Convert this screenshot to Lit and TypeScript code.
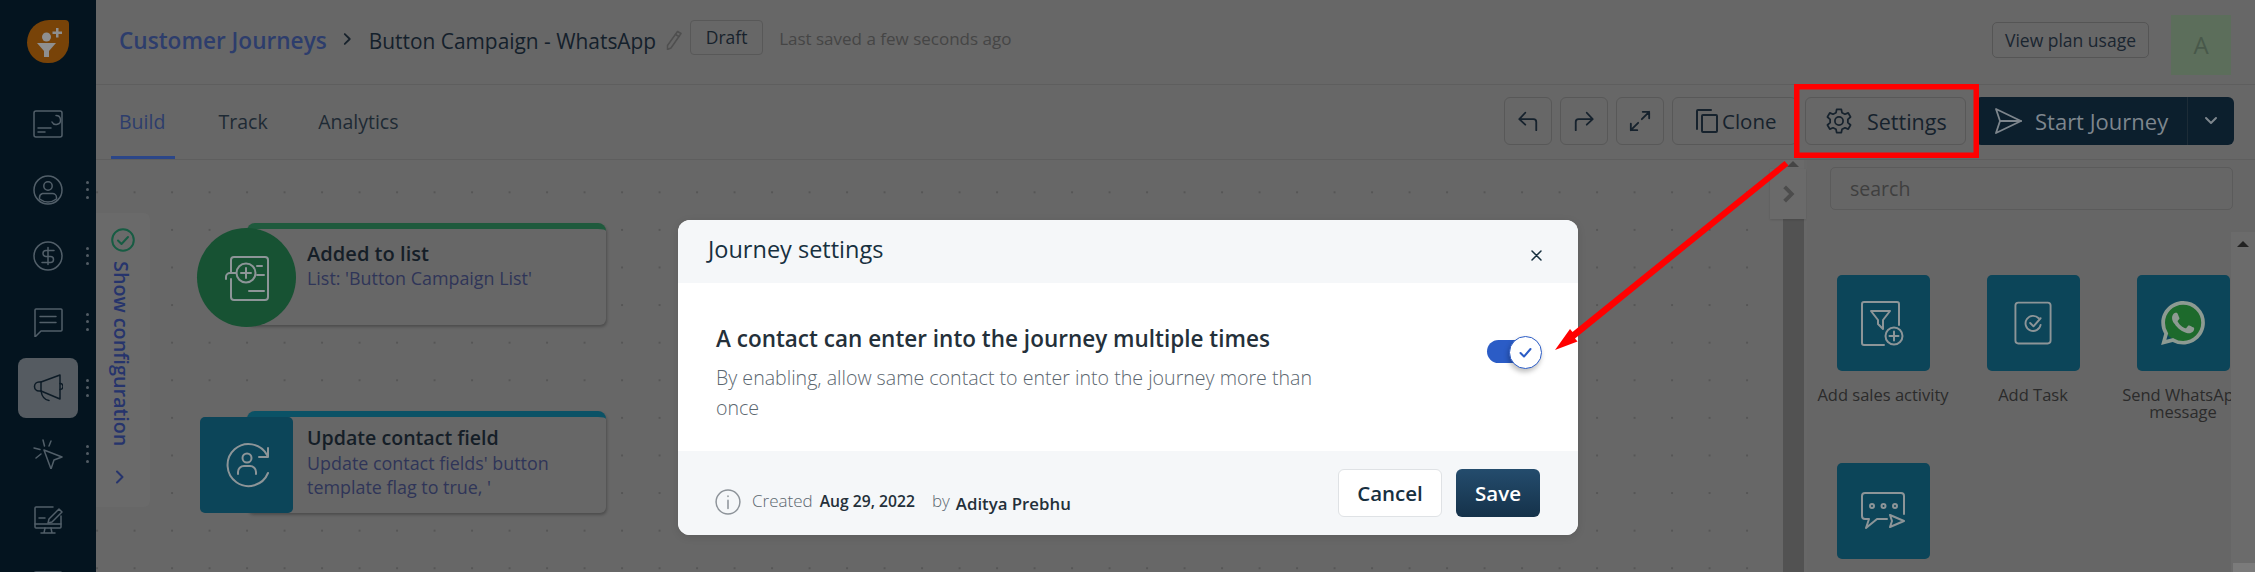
import { LitElement, html, css } from "lit";
import { customElement } from "lit/decorators.js";

const sideIcons = [
  html`<svg viewBox="0 0 30 30"><rect x="1" y="2" width="28" height="26" rx="2"/><path d="M5 19h13M5 23h7"/><path d="M23 6.500a4.500 4.500 0 1 1-4 6.500"/></svg>`,
  html`<svg viewBox="0 0 30 30"><circle cx="15" cy="15" r="14"/><circle cx="15" cy="11" r="4.200"/><path d="M10.500 18.500h9a4 4 0 0 1 4 4v1.500a14 14 0 0 1-17 0v-1.500a4 4 0 0 1 3-4z"/></svg>`,
  html`<svg viewBox="0 0 30 30"><circle cx="15" cy="15" r="14"/><path d="M21 9.500h-8a3 3 0 0 0 0 6h4.500a3 3 0 0 1 0 6H9M15 6.500v17"/></svg>`,
  html`<svg viewBox="0 0 30 30"><path d="M2 3a1 1 0 0 1 1-1h25a1 1 0 0 1 1 1v20a1 1 0 0 1-1 1H8l-6 6z"/><path d="M7 9.500h16M7 15.500h16"/></svg>`,
  html`<svg viewBox="0 0 30 30"><path d="M8 9 27 2v24L8 18z"/><path d="M8 9H6a4.500 4.500 0 0 0 0 9h2"/><path d="M8 18c1 6 4 9 8 9.500"/><path d="M27 10.500a3 3 0 0 1 0 6"/></svg>`,
  html`<svg viewBox="0 0 30 30"><path d="M11 11l18 7-8 3-3 9z"/><path d="M10 1l1.500 6M1 9l6 1.500M3 19l5-4M18 2l-2 5"/></svg>`,
  html`<svg viewBox="0 0 30 30"><path d="M20 2H3a1 1 0 0 0-1 1v19a1 1 0 0 0 1 1h24a1 1 0 0 0 1-1V11"/><path d="M2 19h26M12 23l-1 5M18 23l1 5M8 28h14M6 13h6"/><path d="M16 14l10-10 3 3-10 10-4 1z"/></svg>`,
  html`<svg viewBox="0 0 30 30"><rect x="1" y="1" width="28" height="26" rx="2"/></svg>`,
];

const undo = html`<svg viewBox="0 0 24 24"><path d="M21 22v-9a3 3 0 0 0-3-3H3M9 3 2.500 10l6.500 6"/></svg>`;
const redo = html`<svg viewBox="0 0 24 24"><path d="M3 22v-9a3 3 0 0 1 3-3h15M15 3l6.500 7-6.500 6"/></svg>`;
const expand = html`<svg viewBox="0 0 24 24"><path d="M14 10 22 2M15 2h7v7M10 14l-8 8M2 15v7h7"/></svg>`;
const clone = html`<svg viewBox="0 0 24 24"><path d="M16 1H3a1 1 0 0 0-1 1v18"/><rect x="7" y="6" width="15" height="17" rx="1"/></svg>`;
const gear = html`<svg viewBox="0 0 24 24"><circle cx="12" cy="12" r="3.500"/><path d="M10 2h4l.6 3 2.500 1.200 2.800-1.200 2 3.600-2.300 2v2.800l2.300 2-2 3.600-2.800-1.200-2.500 1.200-.6 3h-4l-.6-3-2.500-1.200-2.800 1.200-2-3.600 2.300-2v-2.800l-2.300-2 2-3.600 2.800 1.200L9.400 5z"/></svg>`;
const send = html`<svg viewBox="0 0 28 28"><path d="M2 2l25 12L2 26l4-12z"/><path d="M6 14h21"/></svg>`;
const caret = html`<svg viewBox="0 0 14 10"><path d="M2 2l5 5 5-5"/></svg>`;
const chevron = html`<svg viewBox="0 0 10 14"><path d="M2 1.500 7.500 7 2 12.500"/></svg>`;
const pencil = html`<svg viewBox="0 0 16 20"><path d="M11.500 1.500l3.500 2L5 18l-3.500 1.500L1.500 15.500z"/><path d="M9.500 4.500l3.500 2"/></svg>`;

const tileFilter = html`<svg viewBox="0 0 44 46"><path d="M38 25V4a2 2 0 0 0-2-2H3a2 2 0 0 0-2 2v39a2 2 0 0 0 2 2h20"/><path d="M10 11h19l-7 9v9l-5-5v-4z"/><circle cx="33" cy="36" r="8.500"/><path d="M33 31.500v9M28.500 36h9"/></svg>`;
const tileTask = html`<svg viewBox="0 0 40 46"><rect x="1.500" y="1.500" width="37" height="43" rx="3"/><path d="M26 18a8 8 0 1 0 2 7"/><path d="M17 23l3.500 3.500L28 18"/></svg>`;
const tileWa = html`<svg viewBox="0 0 24 24"><circle class="wa-g" cx="12" cy="12" r="10.500"/><path class="wa" d="M17.472 14.382c-.297-.149-1.758-.867-2.03-.967-.273-.099-.471-.148-.67.15-.197.297-.767.966-.94 1.164-.173.199-.347.223-.644.075-.297-.15-1.255-.463-2.39-1.475-.883-.788-1.48-1.761-1.653-2.059-.173-.297-.018-.458.13-.606.134-.133.298-.347.446-.52.149-.174.198-.298.298-.497.099-.198.05-.371-.025-.52-.075-.149-.669-1.612-.916-2.207-.242-.579-.487-.5-.669-.51-.173-.008-.371-.01-.57-.01-.198 0-.52.074-.792.372-.272.297-1.04 1.016-1.04 2.479 0 1.462 1.065 2.875 1.213 3.074.149.198 2.096 3.2 5.077 4.487.709.306 1.262.489 1.694.625.712.227 1.36.195 1.871.118.571-.085 1.758-.719 2.006-1.413.248-.694.248-1.289.173-1.413-.074-.124-.272-.198-.57-.347m-5.421 7.403h-.004a9.87 9.87 0 01-5.031-1.378l-.361-.214-3.741.982.998-3.648-.235-.374a9.86 9.86 0 01-1.51-5.26c.001-5.45 4.436-9.884 9.888-9.884 2.64 0 5.122 1.03 6.988 2.898a9.825 9.825 0 012.893 6.994c-.003 5.45-4.437 9.884-9.885 9.884m8.413-18.297A11.815 11.815 0 0012.05 0C5.495 0 .16 5.335.157 11.892c0 2.096.547 4.142 1.588 5.945L.057 24l6.305-1.654a11.882 11.882 0 005.683 1.448h.005c6.554 0 11.89-5.335 11.893-11.893a11.821 11.821 0 00-3.48-8.413z"/></svg>`;
const tileChat = html`<svg viewBox="0 0 44 38"><path d="M43 22V4a3 3 0 0 0-3-3H4a3 3 0 0 0-3 3v20a3 3 0 0 0 3 3h4l-3 9 11-9h10"/><circle cx="11" cy="14" r="2"/><circle cx="22.500" cy="14" r="2"/><circle cx="34" cy="14" r="2"/><path d="M29 23l14 6-14 6 2-6z"/></svg>`;

const tiles = [
  { icon: tileFilter, label: "Add sales activity", cls: "i-filter" },
  { icon: tileTask, label: "Add Task", cls: "i-task" },
  { icon: tileWa, label: "Send WhatsApp message", cls: "i-wa" },
  { icon: tileChat, label: "", cls: "i-chat" },
];

@customElement("app-root")
export class AppRoot extends LitElement {
  static styles = css`
    :host { display: block; width: 2255px; height: 572px; position: relative; overflow: hidden;
      font-family: "Open Sans", "Noto Sans", sans-serif; background: #676767; color: #17222c; }
    svg { display: block; fill: none; stroke: currentColor; stroke-width: 2; stroke-linecap: round; stroke-linejoin: round; }
    .app { display: flex; height: 572px; }

    .side { width: 96px; flex: none; background: #04141f; overflow: hidden; display: flex; flex-direction: column; align-items: center; padding-top: 20px; gap: 6px; box-sizing: border-box; height: 572px; }
    .logo { width: 42px; height: 43px; margin-bottom: 25px; flex: none; background: #784308; border-radius: 55% 10% 50% 50%; display: flex; align-items: center; justify-content: center; }
    .logo svg { width: 30px; height: 32px; fill: #8f8f8f; stroke: none; }
    .item { width: 60px; height: 60px; flex: none; position: relative; display: flex; align-items: center; justify-content: center; color: #525f69; border-radius: 8px; }
    .item svg { width: 30px; height: 30px; stroke-width: 1.500; }
    .item.active { background: #555b61; color: #0d1b26; }
    .dots { position: absolute; left: 68px; top: 21px; display: flex; flex-direction: column; gap: 4.400px; }
    .dots i { width: 3px; height: 3px; border-radius: 50%; background: #525c64; display: block; }

    .main { flex: 1; display: flex; flex-direction: column; min-width: 0; }
    .top { height: 85px; flex: none; box-sizing: border-box; border-bottom: 1px solid #5e5e5e; display: flex; align-items: center; padding: 0 24px 3px 23px; }
    .crumb { font-size: 22.600px; font-weight: 600; color: #2d3d6c; }
    .sep { width: 9px; height: 14px; margin: -4px 17px 0 16px; color: #17222c; }
    .sep svg { width: 9px; height: 14px; stroke-width: 2; }
    .name { font-size: 20.900px; font-weight: 500; color: #14202b; }
    .pen { width: 16px; height: 20px; margin: -2px 8px 0 10px; color: #4f4f4f; }
    .pen svg { width: 16px; height: 20px; stroke-width: 1.500; }
    .draft { height: 35px; width: 73px; box-sizing: border-box; border: 1px solid #585858; border-radius: 4px; display: flex; align-items: center; justify-content: center; font-size: 17.500px; font-weight: 500; color: #17222c; margin-top: -7px; }
    .saved { margin: -4px 0 0 16px; font-size: 17px; color: #454545; }
    .plan { margin: -2px 0 0 auto; height: 36px; box-sizing: border-box; border: 1px solid #555; border-radius: 5px; padding: 0 12px; display: flex; align-items: center; font-size: 17.500px; font-weight: 500; color: #1a2530; }
    .avatar { margin: 8px 0 0 22px; width: 60px; height: 60px; background: #5c6e5b; color: #48584a; display: flex; align-items: center; justify-content: center; font-size: 24px; }

    .tabs { height: 75px; flex: none; box-sizing: border-box; border-bottom: 1px solid #5e5e5e; display: flex; padding: 0 21px 0 15px; }
    .tab { padding: 0 8px; height: 74px; box-sizing: border-box; display: flex; align-items: center; font-size: 19.500px; color: #1e2a34; margin-right: 34.500px; padding-bottom: 2px; position: relative; }
    .tab.on { color: #2d3d6c; font-weight: 500; width: 64px; margin-right: 35.500px; }
    .tab.on::after { content: ""; position: absolute; left: 0; right: 0; bottom: 0; height: 3px; background: #2b4688; }
    .tools { margin-left: auto; display: flex; gap: 8px; align-items: center; margin-top: -2px; }
    .btn { height: 48px; box-sizing: border-box; border: 1px solid #585858; border-radius: 6px; display: flex; align-items: center; justify-content: center; color: #16222d; font-size: 20.500px; font-weight: 500; }
    .btn.sq { width: 48px; }
    .btn.sq svg { width: 22px; height: 22px; }
    .btn.clone { width: 125px; justify-content: flex-start; gap: 3px; padding-left: 22px; }
    .btn.clone svg { width: 24px; height: 26px; }
    .btn.settings { width: 161px; justify-content: flex-start; gap: 14px; padding-left: 19px; font-size: 21.500px; }
    .btn.settings svg { width: 28px; height: 28px; stroke-width: 1.500; }
    .start { width: 259px; height: 48px; margin-left: 1px; background: #0c1f2d; border-radius: 6px; display: flex; align-items: center; color: #7e868d; font-size: 22px; font-weight: 500; }
    .start .go { flex: 1; display: flex; align-items: center; gap: 13px; padding-left: 19px; }
    .start .go svg { width: 28px; height: 28px; stroke-width: 1.800; }
    .start .more { width: 47px; height: 48px; border-left: 1px solid #1d2c37; display: flex; align-items: center; justify-content: center; box-sizing: border-box; }
    .start .more svg { width: 14px; height: 10px; }

    .body { flex: 1; display: flex; min-height: 0; }
    .canvas { flex: 1; position: relative; background-color: #676767; background-image: radial-gradient(circle, #565656 1px, transparent 1.300px); background-size: 37.500px 37.600px; background-position: -17.700px 13.500px; }
    .cfg { position: absolute; left: 0; top: 53px; width: 54px; height: 294px; background: #6a6a6a; border-radius: 0 6px 6px 0; display: flex; flex-direction: column; align-items: center; color: #26346c; padding-top: 15px; box-sizing: border-box; }
    .cfg .ok { width: 24px; height: 24px; color: #175c43; }
    .cfg .v { writing-mode: vertical-rl; font-size: 19.800px; font-weight: 600; margin-top: 9px; line-height: 24px; margin-left: -4px; }
    .cfg .ch { width: 10px; height: 14px; margin-top: 24px; margin-left: -6px; }
    .cfg .ch svg { width: 10px; height: 14px; stroke-width: 2; }

    .node { position: absolute; left: 151px; width: 359px; height: 102px; box-sizing: border-box; border-top: 6px solid #1f5a3d; background: #676767; border-radius: 8px 8px 6px 6px; box-shadow: 1px 2px 3px rgba(0,0,0,.25); padding: 12px 0 0 60px; }
    .node.n1 { top: 63px; }
    .node.n2 { top: 251px; border-top-color: #0b5266; padding-top: 8px; }
    .n2 span { margin-top: 1px; }
    .node .ic { position: absolute; display: flex; align-items: center; justify-content: center; color: #8d9598; }
    .n1 .ic { left: -50px; top: -1px; width: 99px; height: 99px; border-radius: 50%; background: #175233; }
    .n2 .ic { left: -47px; top: 0; width: 93px; height: 96px; border-radius: 5px; background: #0c4559; }
    .ic svg { width: 44px; height: 46px; }
    .node b { display: block; font-size: 20.100px; font-weight: 600; line-height: 25px; color: #151e27; }
    .n2 b { font-size: 19.600px; }
    .node span { display: block; font-size: 17.900px; line-height: 24px; color: #2f3558; }
    .vbar { position: absolute; right: 3px; top: 0; bottom: 0; width: 21px; background: #525252; }
    .vbar .upb { height: 9px; background: #6a6a6a; position: relative; }
    .vbar .upb::after { content: ""; position: absolute; left: 4px; top: 1px; border: 6px solid transparent; border-top: 0; border-bottom: 6px solid #454545; }
    .fold { position: absolute; right: 1px; top: 9px; width: 36px; height: 50px; background: #6a6a6a; display: flex; align-items: center; justify-content: center; color: #4c4c4c; box-shadow: 0 1px 2px rgba(0,0,0,.12); }
    .fold svg { width: 13px; height: 18px; stroke-width: 3; stroke-linecap: butt; stroke-linejoin: miter; }

    .panel { width: 448px; flex: none; position: relative; background: #666; overflow: hidden; }
    .search { margin: 7px 22px 0 23px; height: 43px; box-sizing: border-box; border: 1px solid #5b5b5b; border-radius: 5px; padding-left: 19px; display: flex; align-items: center; font-size: 19.500px; color: #3f3f3f; }
    .grid { margin: 65px 24px 0 1px; display: grid; grid-template-columns: repeat(3, 150px); grid-auto-rows: 188px; overflow: hidden; height: 340px; }
    .card { display: flex; flex-direction: column; align-items: center; width: 150px; text-align: center; font-size: 16.500px; line-height: 17px; color: #2b2b2b; }
    .tile { width: 93px; height: 96px; flex: none; border-radius: 5px; background: #0c4559; margin-bottom: 15px; display: flex; align-items: center; justify-content: center; color: #8d9598; }
    .i-filter svg { width: 44px; height: 46px; }
    .i-task svg { width: 38px; height: 44px; }
    .i-wa svg { width: 44px; height: 44px; stroke: none; }
    .wa { fill: #8d9a92; }
    .wa-g { fill: #1d6a2c; }
    .i-chat svg { width: 44px; height: 38px; }
    .pbar { position: absolute; right: 0; top: 72px; bottom: 0; width: 24px; background: #6b6b6b; }
    .pbar::before { content: ""; position: absolute; left: 6px; top: 9px; border: 6px solid transparent; border-top: 0; border-bottom: 6px solid #222; }
    .pbar::after { content: ""; position: absolute; right: 0; bottom: 0; width: 22px; height: 9px; background: #7b7b7b; }

    .modal { position: absolute; left: 678px; top: 220px; width: 900px; height: 315px; background: #fff; border-radius: 12px; overflow: hidden; display: flex; flex-direction: column; box-shadow: 0 2px 8px rgba(0,0,0,.1); }
    .mh { height: 63px; flex: none; box-sizing: border-box; background: #f5f7f9; display: flex; align-items: center; justify-content: space-between; padding: 0 36px 0 30px; }
    .mh h2 { margin: 0 0 6px; font-size: 23.500px; font-weight: 500; color: #17303f; }
    .mh .x { width: 11px; height: 11px; margin-top: 8px; color: #17303f; }
    .mh .x svg { width: 11px; height: 11px; stroke-width: 1.500; }
    .mb { flex: 1; display: flex; padding: 0 36px 0 38px; }
    .mb h3 { margin: 42px 0 10px; font-size: 22.500px; line-height: 28px; font-weight: 600; color: #24303a; }
    .mb p { margin: 0; width: 620px; font-size: 19.600px; line-height: 30px; font-weight: 300; color: #5c6770; }
    .tog { margin: 53px 0 0 auto; width: 55px; height: 33px; position: relative; }
    .tog .tr { position: absolute; left: 0; top: 4px; width: 44px; height: 23px; border-radius: 12px; background: #2b5cc6; }
    .tog .kn { position: absolute; right: 0; top: 0; width: 33px; height: 33px; box-sizing: border-box; border: 1.500px solid #2b5cc6; background: #fff; border-radius: 50%; display: flex; align-items: center; justify-content: center; color: #2b5cc6; box-shadow: -1px 3px 5px rgba(0,0,0,.25); }
    .tog .kn svg { width: 13px; height: 11px; stroke-width: 2; }
    .mf { height: 84px; flex: none; box-sizing: border-box; background: #f5f7f9; display: flex; align-items: center; padding: 0 38px 0 37px; }
    .info { width: 26px; height: 26px; color: #8d9399; margin-top: 18px; }
    .info svg { width: 26px; height: 26px; stroke-width: 1.400; }
    .meta { margin: 14px 0 0 11px; font-size: 17px; font-weight: 300; color: #5c6770; display: flex; align-items: baseline; }
    .meta b { font-weight: 600; color: #24303a; font-size: 15.700px; margin: 0 7px; }
    .meta .by { margin: 0 6px 0 10px; }
    .meta em { font-style: normal; font-weight: 600; color: #24303a; position: relative; top: 3px; font-size: 16.800px; }
    .cancel { margin-left: auto; width: 104px; height: 48px; box-sizing: border-box; border: 1px solid #dfe2e5; background: #fff; border-radius: 6px; display: flex; align-items: center; justify-content: center; font-size: 20.500px; font-weight: 600; color: #17303f; }
    .save { margin-left: 14px; width: 84px; height: 48px; border-radius: 6px; background: linear-gradient(#244c6d, #15324a); display: flex; align-items: center; justify-content: center; color: #fff; font-size: 20.500px; font-weight: 600; }

    .marks { position: absolute; left: 0; top: 0; width: 2255px; height: 572px; pointer-events: none; fill: #f00; stroke: none; }
  `;

  render() {
    return html`
      <div class="app">
        <nav class="side">
          <div class="logo"><svg viewBox="0 0 30 32"><circle cx="13.500" cy="11" r="4.500"/><path d="M4 17h19l-7 8v6h-5v-6z"/><path d="M23 2h2.500v3.500H29V8h-3.500v3.500H23V8h-3.500V5.500H23z"/></svg></div>
          ${sideIcons.map((ic, i) => html`
            <div class="item ${i === 4 ? "active" : ""}">${ic}
              ${i >= 1 && i <= 5 ? html`<div class="dots"><i></i><i></i><i></i></div>` : ""}
            </div>`)}
        </nav>
        <div class="main">
          <header class="top">
            <span class="crumb">Customer Journeys</span>
            <span class="sep">${chevron}</span>
            <span class="name">Button Campaign - WhatsApp</span>
            <span class="pen">${pencil}</span>
            <span class="draft">Draft</span>
            <span class="saved">Last saved a few seconds ago</span>
            <span class="plan">View plan usage</span>
            <span class="avatar">A</span>
          </header>
          <div class="tabs">
            <div class="tab on">Build</div>
            <div class="tab">Track</div>
            <div class="tab">Analytics</div>
            <div class="tools">
              <div class="btn sq">${undo}</div>
              <div class="btn sq">${redo}</div>
              <div class="btn sq">${expand}</div>
              <div class="btn clone">${clone}Clone</div>
              <div class="btn settings">${gear}Settings</div>
              <div class="start">
                <div class="go">${send}Start Journey</div>
                <div class="more">${caret}</div>
              </div>
            </div>
          </div>
          <div class="body">
            <div class="canvas">
              <div class="cfg">
                <div class="ok"><svg viewBox="0 0 24 24"><circle cx="12" cy="12" r="10.800"/><path d="M7 12.500l3.500 3.500L17 9"/></svg></div>
                <div class="v">Show configuration</div>
                <div class="ch">${chevron}</div>
              </div>
              <div class="node n1">
                <div class="ic"><svg viewBox="0 0 44 46"><path d="M6 18V5a3 3 0 0 1 3-3h31a3 3 0 0 1 3 3v37a3 3 0 0 1-3 3H9a3 3 0 0 1-3-3V24"/><circle cx="21" cy="18" r="9.500"/><path d="M21 13v10M16 18h10M1 24v-2a4 4 0 0 1 4-4h6M32 11h5M32 20h7M24 36h15"/></svg></div>
                <b>Added to list</b><span>List: 'Button Campaign List'</span>
              </div>
              <div class="node n2">
                <div class="ic"><svg viewBox="0 0 44 46"><path d="M42 13A21 21 0 1 0 43 31"/><path d="M43 6v9H34"/><circle cx="22" cy="16" r="4.500"/><path d="M13 32v-2a6 6 0 0 1 6-6h6a6 6 0 0 1 6 6v2"/></svg></div>
                <b>Update contact field</b><span>Update contact fields' button<br />template flag to true, '</span>
              </div>
              <div class="vbar"><div class="upb"></div></div>
              <div class="fold">${chevron}</div>
            </div>
            <aside class="panel">
              <div class="search">search</div>
              <div class="grid">
                ${tiles.map((t) => html`<div class="card"><div class="tile ${t.cls}">${t.icon}</div>${t.label}</div>`)}
              </div>
              <div class="pbar"></div>
            </aside>
          </div>
        </div>
      </div>

      <section class="modal">
        <div class="mh">
          <h2>Journey settings</h2>
          <span class="x"><svg viewBox="0 0 11 11"><path d="M1 1l9 9M10 1l-9 9"/></svg></span>
        </div>
        <div class="mb">
          <div>
            <h3>A contact can enter into the journey multiple times</h3>
            <p>By enabling, allow same contact to enter into the journey more than once</p>
          </div>
          <div class="tog"><div class="tr"></div><div class="kn"><svg viewBox="0 0 13 11"><path d="M1.500 6l3.500 3.500L11.500 2"/></svg></div></div>
        </div>
        <div class="mf">
          <div class="info"><svg viewBox="0 0 24 24"><circle cx="12" cy="12" r="11"/><path d="M12 10.500V18M12 6.500v.5"/></svg></div>
          <div class="meta"><span>Created</span><b>Aug 29, 2022</b><span class="by">by</span><em>Aditya Prebhu</em></div>
          <div class="cancel">Cancel</div>
          <div class="save">Save</div>
        </div>
      </section>

      <svg class="marks" viewBox="0 0 2255 572">
        <path fill-rule="evenodd" d="M1794 84h185v74h-185zM1799.500 89.500v63h174v-63z"/>
        <path d="M1784.500 161l4 4.500L1575 338.500l2.500 3-22.500 8.500 15-21 2.500 3z"/>
      </svg>
    `;
  }
}
